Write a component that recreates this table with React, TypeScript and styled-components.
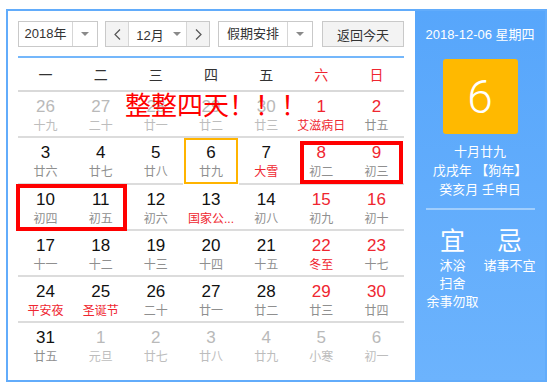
import styled, { createGlobalStyle } from "styled-components";

const CJK = `"Liberation Sans", "Noto Sans CJK SC", sans-serif`;
const RED = "#ef2630";

const GlobalStyle = createGlobalStyle`
    html, body {
        margin: 0;
        padding: 0;
        background: #ffffff;
    }
    body {
        font-family: ${CJK};
    }
`;

type Kind = "normal" | "other" | "weekend";

interface Day {
    num: number;
    lunar: string;
    kind: Kind;
    fest?: boolean;
    today?: boolean;
}

const d = (num: number, lunar: string, kind: Kind = "normal", fest = false, today = false): Day => ({
    num,
    lunar,
    kind,
    fest,
    today,
});

const DAYS: Day[] = [
    d(26, "十九", "other"), d(27, "二十", "other"), d(28, "廿一", "other"), d(29, "廿二", "other"),
    d(30, "廿三", "other"), d(1, "艾滋病日", "weekend", true), d(2, "廿五", "weekend"),
    d(3, "廿六"), d(4, "廿七"), d(5, "廿八"), d(6, "廿九", "normal", false, true),
    d(7, "大雪", "normal", true), d(8, "初二", "weekend"), d(9, "初三", "weekend"),
    d(10, "初四"), d(11, "初五"), d(12, "初六"), d(13, "国家公...", "normal", true),
    d(14, "初八"), d(15, "初九", "weekend"), d(16, "初十", "weekend"),
    d(17, "十一"), d(18, "十二"), d(19, "十三"), d(20, "十四"), d(21, "十五"),
    d(22, "冬至", "weekend", true), d(23, "十七", "weekend"),
    d(24, "平安夜", "normal", true), d(25, "圣诞节", "normal", true), d(26, "二十"), d(27, "廿一"),
    d(28, "廿二"), d(29, "廿三", "weekend"), d(30, "廿四", "weekend"),
    d(31, "廿五"), d(1, "元旦", "other"), d(2, "廿七", "other"), d(3, "廿八", "other"),
    d(4, "廿九", "other"), d(5, "小寒", "other"), d(6, "初一", "other"),
];

const WEEK = ["一", "二", "三", "四", "五", "六", "日"];

const Frame = styled.div`
    margin: 9px 0 0 6px;
    width: 541px;
    height: 373px;
    box-sizing: border-box;
    border: 2px solid #62acfb;
    display: flex;
`;

const Main = styled.section`
    width: 407px;
    box-sizing: border-box;
    padding: 10px 11px 0 10px;
    background: #ffffff;
`;

const Toolbar = styled.div`
    display: flex;
    height: 26px;
    padding-bottom: 9px;
    border-bottom: 2px solid #74b7fb;
`;

const Select = styled.div<{ $w: number; $gap?: number }>`
    width: ${(p) => p.$w}px;
    margin-right: ${(p) => p.$gap ?? 0}px;
    height: 26px;
    box-sizing: border-box;
    border: 1px solid #c9c9c9;
    background: #fff;
    display: flex;
    font-size: 13px;
    color: #333;
`;

const SelectText = styled.span`
    flex: 1;
    display: flex;
    align-items: center;
    justify-content: center;
    line-height: 24px;
`;

const ArrowBox = styled.span<{ $line?: boolean }>`
    width: 24px;
    display: flex;
    align-items: center;
    justify-content: center;
    border-left: ${(p) => (p.$line ? "1px solid #d6d6d6" : "none")};
`;

const Caret = styled.i`
    width: 0;
    height: 0;
    border-left: 4px solid transparent;
    border-right: 4px solid transparent;
    border-top: 4px solid #8a8a8a;
`;

const Group = styled.div`
    display: flex;
    width: 105px;
    height: 26px;
    margin-right: 8px;
    box-sizing: border-box;
    border: 1px solid #c9c9c9;
`;

const StepButton = styled.span<{ $side: "l" | "r" }>`
    width: 22px;
    display: flex;
    align-items: center;
    justify-content: center;
    background: #f3f3f3;
    ${(p) => (p.$side === "l" ? "border-right: 1px solid #d6d6d6;" : "border-left: 1px solid #d6d6d6;")}
`;

const MonthPick = styled.span`
    flex: 1;
    display: flex;
    align-items: center;
    justify-content: center;
    gap: 9px;
    font-size: 13px;
    color: #333;
    padding-left: 2px;
`;

const TodayButton = styled.button`
    width: 82px;
    height: 26px;
    margin-left: auto;
    box-sizing: border-box;
    border: 1px solid #c9c9c9;
    background: #f3f3f3;
    font-family: ${CJK};
    font-size: 13px;
    color: #333;
    padding: 0;
`;

const WeekRow = styled.div`
    display: grid;
    grid-template-columns: repeat(7, 1fr);
    height: 32px;
    border-bottom: 2px solid #d9d9d9;
`;

const WeekCell = styled.span<{ $red: boolean }>`
    display: flex;
    align-items: center;
    justify-content: center;
    font-size: 14px;
    color: ${(p) => (p.$red ? RED : "#333")};
`;

const Body = styled.div`
    position: relative;
    display: grid;
    grid-template-columns: repeat(7, 1fr);
    grid-auto-rows: 46.3px;
`;

const Cell = styled.div<{ $today: boolean; $last: boolean }>`
    box-sizing: border-box;
    border-bottom: ${(p) => (p.$last ? "none" : "2px solid #dcdcdc")};
    display: flex;
    flex-direction: column;
    align-items: center;
    padding-top: ${(p) => (p.$today ? 3 : 5)}px;
    ${(p) =>
        p.$today &&
        `
        border: 2px solid #ffb400;
        margin: 0 1px 1px 1px;
    `}
`;

const Num = styled.span<{ $kind: Kind }>`
    font-family: "Liberation Sans", sans-serif;
    font-size: 17px;
    line-height: 20px;
    color: ${(p) => (p.$kind === "other" ? "#b9b9b9" : p.$kind === "weekend" ? RED : "#111")};
`;

const Lunar = styled.span<{ $kind: Kind; $fest: boolean }>`
    font-size: 12px;
    line-height: 18px;
    white-space: nowrap;
    color: ${(p) => (p.$fest && p.$kind !== "other" ? RED : p.$kind === "other" ? "#bdbdbd" : "#8f8f8f")};
`;

const Shout = styled.span`
    position: absolute;
    left: 107px;
    top: -3px;
    font-family: "Noto Sans CJK SC", sans-serif;
    font-size: 26px;
    line-height: 30px;
    color: #ff0000;
    white-space: nowrap;
    pointer-events: none;
`;

const Mark = styled.span<{ $x: number; $y: number; $w: number; $h: number }>`
    position: absolute;
    left: ${(p) => p.$x}px;
    top: ${(p) => p.$y}px;
    width: ${(p) => p.$w}px;
    height: ${(p) => p.$h}px;
    box-sizing: border-box;
    border: 4px solid #ff0000;
`;

const Side = styled.aside`
    flex: 1;
    background: linear-gradient(#57a6fb, #6cb3fd);
    color: #fff;
    display: flex;
    flex-direction: column;
    align-items: center;
    padding-top: 16px;
    font-size: 13px;
`;

const DateLine = styled.div`
    line-height: 16px;
    white-space: nowrap;
`;

const BigDay = styled.div`
    margin-top: 16px;
    width: 75px;
    height: 75px;
    border-radius: 3px;
    background: #ffb900;
    display: flex;
    align-items: center;
    justify-content: center;
    font-family: Roboto, "Liberation Sans", sans-serif;
    font-weight: 300;
    font-size: 46px;
`;

const LunarInfo = styled.div`
    margin-top: 8px;
    line-height: 19px;
    text-align: center;
    white-space: nowrap;
`;

const Divider = styled.hr`
    width: 109px;
    margin: 9px 0 0 0;
    border: none;
    border-top: 2px solid rgba(255, 255, 255, 0.4);
`;

const Advice = styled.div`
    margin-top: 14px;
    width: 100%;
    box-sizing: border-box;
    padding: 0 7px 0 9px;
    display: grid;
    grid-template-columns: 1fr 1fr;
`;

const AdviceCol = styled.div`
    display: flex;
    flex-direction: column;
    align-items: center;
`;

const AdviceHead = styled.span`
    font-family: "Noto Sans CJK SC", sans-serif;
    font-size: 25px;
    line-height: 30px;
    margin-bottom: 3px;
`;

const AdviceItem = styled.span`
    line-height: 18px;
    white-space: nowrap;
`;

const Chevron = ({ dir }: { dir: "l" | "r" }) => (
    <svg width="7" height="11" viewBox="0 0 7 11">
        <polyline
            points={dir === "l" ? "6,0.5 1,5.5 6,10.5" : "1,0.5 6,5.5 1,10.5"}
            fill="none"
            stroke="#555"
            strokeWidth="1.2"
        />
    </svg>
);

export default function App() {
    return (
        <>
            <GlobalStyle />
            <Frame>
                <Main>
                    <Toolbar>
                        <Select $w={80} $gap={7}>
                            <SelectText>2018年</SelectText>
                            <ArrowBox $line>
                                <Caret />
                            </ArrowBox>
                        </Select>
                        <Group>
                            <StepButton $side="l">
                                <Chevron dir="l" />
                            </StepButton>
                            <MonthPick>
                                12月 <Caret />
                            </MonthPick>
                            <StepButton $side="r">
                                <Chevron dir="r" />
                            </StepButton>
                        </Group>
                        <Select $w={95}>
                            <SelectText>假期安排</SelectText>
                            <ArrowBox $line>
                                <Caret />
                            </ArrowBox>
                        </Select>
                        <TodayButton>返回今天</TodayButton>
                    </Toolbar>
                    <WeekRow>
                        {WEEK.map((w, i) => (
                            <WeekCell key={w} $red={i >= 5}>
                                {w}
                            </WeekCell>
                        ))}
                    </WeekRow>
                    <Body>
                        {DAYS.map((day, i) => (
                            <Cell key={i} $today={!!day.today} $last={i >= 35}>
                                <Num $kind={day.kind}>{day.num}</Num>
                                <Lunar $kind={day.kind} $fest={!!day.fest}>
                                    {day.lunar}
                                </Lunar>
                            </Cell>
                        ))}
                        <Shout>整整四天！！！</Shout>
                        <Mark $x={282} $y={49} $w={103} $h={43} />
                        <Mark $x={-2} $y={92} $w={111} $h={47} />
                    </Body>
                </Main>
                <Side>
                    <DateLine>2018-12-06 星期四</DateLine>
                    <BigDay>6</BigDay>
                    <LunarInfo>
                        十月廿九
                        <br />
                        戊戌年 【狗年】
                        <br />
                        癸亥月 壬申日
                    </LunarInfo>
                    <Divider />
                    <Advice>
                        <AdviceCol>
                            <AdviceHead>宜</AdviceHead>
                            <AdviceItem>沐浴</AdviceItem>
                            <AdviceItem>扫舍</AdviceItem>
                            <AdviceItem>余事勿取</AdviceItem>
                        </AdviceCol>
                        <AdviceCol>
                            <AdviceHead>忌</AdviceHead>
                            <AdviceItem>诸事不宜</AdviceItem>
                        </AdviceCol>
                    </Advice>
                </Side>
            </Frame>
        </>
    );
}
